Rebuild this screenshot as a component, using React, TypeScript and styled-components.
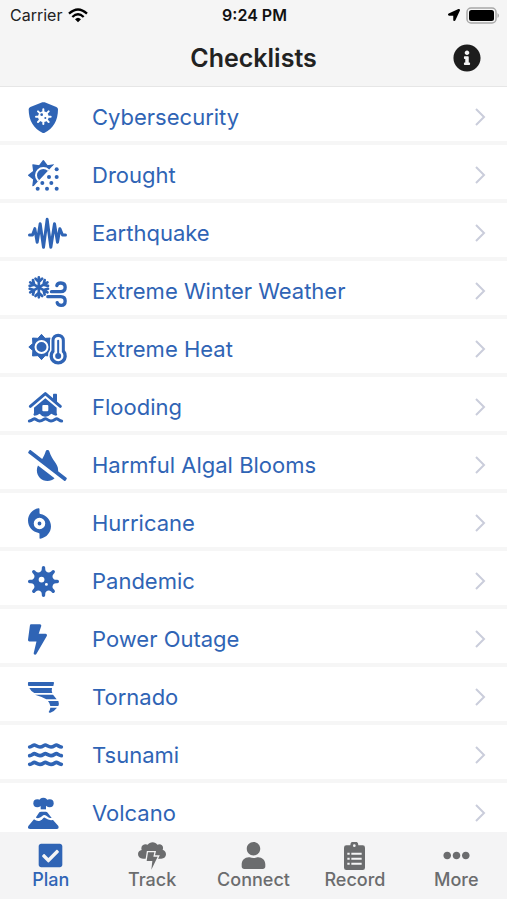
import React from "react";
import styled, { createGlobalStyle } from "styled-components";
import {
  FaBolt,
  FaCheckSquare,
  FaEllipsisH,
  FaInfoCircle,
  FaLocationArrow,
  FaTintSlash,
  FaUser,
  FaVirus,
} from "react-icons/fa";
import { FaHurricane } from "react-icons/fa6";

const blue = "#2f64b5";

const GlobalStyle = createGlobalStyle`
  * { box-sizing: border-box; }
  body { margin: 0; background: #fff; font-family: Inter, "Liberation Sans", sans-serif; }
`;

const Screen = styled.div`
  display: flex;
  flex-direction: column;
  height: 100vh;
  overflow: hidden;
`;

const Header = styled.header`
  flex: none;
  background: #f5f5f5;
  border-bottom: 1px solid #e6e6e6;
`;

const StatusBar = styled.div`
  display: grid;
  grid-template-columns: 1fr auto 1fr;
  align-items: center;
  height: 30px;
  padding: 0 8px 0 10px;
  color: #222;
  font-size: 16px;
`;

const Carrier = styled.div`
  display: flex;
  align-items: center;
  gap: 6px;
`;

const Clock = styled.time`
  color: #111;
  font-weight: 600;
`;

const Indicators = styled.div`
  display: flex;
  align-items: center;
  justify-content: flex-end;
  gap: 6px;
  color: #000;
`;

const TitleBar = styled.div`
  display: grid;
  grid-template-columns: 1fr auto 1fr;
  align-items: center;
  height: 56px;
  padding: 0 26px;
`;

const Title = styled.h1`
  grid-column: 2;
  margin: 0;
  color: #222;
  font-size: 25px;
  font-weight: 600;
  line-height: 32px;
`;

const InfoButton = styled.button`
  display: flex;
  justify-self: end;
  padding: 0;
  border: 0;
  background: none;
  color: #1d1d1d;
  font-size: 28px;
`;

const List = styled.ul`
  flex: 1;
  min-height: 0;
  margin: 0;
  padding: 0;
  overflow: hidden;
  list-style: none;
`;

const Row = styled.li`
  border-bottom: 4px solid #f6f6f6;
`;

const RowLink = styled.a`
  display: grid;
  grid-template-columns: 64px 1fr auto;
  align-items: center;
  padding: 15px 21px 9px 28px;
  color: ${blue};
  font-size: 22px;
  line-height: 30px;
  text-decoration: none;
`;

const RowIcon = styled.span<{ $width: number }>`
  display: flex;
  align-items: center;
  height: 30px;

  svg {
    flex: none;
    width: ${(p) => p.$width}px;
    height: 31px;
    overflow: visible;
  }
`;

const Tabs = styled.nav`
  display: grid;
  flex: none;
  grid-template-columns: repeat(5, 1fr);
  height: 68px;
  padding-top: 10px;
  background: #f4f4f5;
  border-bottom: 1px solid #fff;
`;

const Tab = styled.a<{ $active?: boolean }>`
  display: flex;
  flex-direction: column;
  align-items: center;
  color: ${(p) => (p.$active ? blue : "#6b6c6e")};
  font-size: 18px;
  font-weight: 500;
  line-height: 22px;
  text-decoration: none;
`;

const TabIcon = styled.span`
  display: flex;
  align-items: center;
  justify-content: center;
  height: 27px;
  font-size: 27px;
`;

const starPoints = (cx: number, cy: number, outer: number, inner: number) =>
  Array.from({ length: 16 }, (_, i) => {
    const r = i % 2 ? inner : outer;
    const a = (i * Math.PI) / 8;
    return `${(cx + r * Math.sin(a)).toFixed(1)},${(cy - r * Math.cos(a)).toFixed(1)}`;
  }).join(" ");

const Wifi = () => (
  <svg width="20" height="15" viewBox="0 0 60 45" fill="none" stroke="#000" strokeWidth="7">
    <path d="M3 17Q30-8 57 17" />
    <path d="M13 27Q30 11 47 27" />
    <path d="M21 34Q30 25 39 34L30 43Z" fill="#000" stroke="none" />
  </svg>
);

const Battery = () => (
  <svg width="33" height="17" viewBox="0 0 33 17">
    <rect x="1" y="1" width="29" height="15" rx="4" fill="#f5f5f5" stroke="#a8a8a8" strokeWidth="1.5" />
    <rect x="3" y="3" width="25" height="11" rx="2.5" fill="#000" />
    <path d="M31.5 6v5q1.5-1 1.5-2.5T31.5 6Z" fill="#a8a8a8" />
  </svg>
);

const Chevron = () => (
  <svg width="12" height="20" viewBox="0 0 12 20" fill="none" stroke="#cacddb" strokeWidth="2">
    <path d="M2 2l8 8-8 8" />
  </svg>
);

const ShieldVirus = () => (
  <svg viewBox="0 0 93 93" fill="currentColor">
    <path d="M43 1Q46 0 50 1L85 15Q90 18 90 22C90 56 75 81 50 92Q46 94 43 92C18 81 2 56 2 22Q2 18 7 15Z" />
    <g stroke="#fff" strokeWidth="6" strokeLinecap="round">
      <path d="M46 22V66M24 44H68M30 28L62 60M62 28L30 60" />
    </g>
    <circle cx="46" cy="44" r="16" fill="#fff" />
    <circle cx="41" cy="38" r="4" />
    <circle cx="52" cy="48" r="3" />
  </svg>
);

const DustSun = () => (
  <svg viewBox="0 0 93 93" fill="currentColor">
    <clipPath id="sun-half">
      <path d="M-4-4H94L77 14 17 78-4 97Z" />
    </clipPath>
    <g clipPath="url(#sun-half)">
      <polygon points={starPoints(46, 46, 44, 31)} stroke="currentColor" strokeWidth="4" strokeLinejoin="round" />
      <circle cx="46" cy="46" r="22" fill="none" stroke="#fff" strokeWidth="6" />
    </g>
    {[[86, 28], [63, 51], [86, 51], [43, 69], [70, 69], [29, 86], [57, 86], [86, 86]].map(([x, y]) => (
      <circle key={`${x}-${y}`} cx={x} cy={y} r="6" />
    ))}
  </svg>
);

const Waveform = () => (
  <svg viewBox="0 0 116 93" fill="none" stroke="currentColor" strokeWidth="9" strokeLinecap="round" strokeLinejoin="round">
    <path d="M4 51H13L20 32 27 73 36 17 46 88 57 4 68 88 79 17 88 73 95 32 103 51H112" />
  </svg>
);

const SnowWind = () => (
  <svg viewBox="0 0 116 93" fill="none" stroke="currentColor" strokeLinecap="round" strokeLinejoin="round">
    {[0, 60, 120, 180, 240, 300].map((a) => (
      <path key={a} d="M32 34V4M22 8L32 18 42 8" strokeWidth="8" transform={`rotate(${a} 32 34)`} />
    ))}
    <path d="M70 47H98C108 47 111 40 111 34C111 26 106 21 98 21C91 21 87 24 86 29" strokeWidth="10" />
    <path d="M59 62H98C107 62 111 68 111 75C111 83 106 88 99 88C92 88 88 84 87 80" strokeWidth="10" />
  </svg>
);

const SunThermometer = () => (
  <svg viewBox="0 0 116 93" fill="currentColor">
    <polygon points={starPoints(40, 39, 38, 28)} stroke="currentColor" strokeWidth="3" strokeLinejoin="round" />
    <circle cx="40" cy="39" r="18" fill="none" stroke="#fff" strokeWidth="6" />
    <path d="M70 19A20 20 0 0 1 110 19V49A26 26 0 1 1 70 49Z" stroke="#fff" strokeWidth="9" />
    <path d="M70 19A20 20 0 0 1 110 19V49A26 26 0 1 1 70 49Z" />
    <path d="M79 20A11 11 0 0 1 101 20V54A16 16 0 1 1 79 54Z" fill="#fff" />
    <path d="M90 20V65" fill="none" stroke="currentColor" strokeWidth="6" strokeLinecap="round" />
    <circle cx="90" cy="66" r="9" />
  </svg>
);

const FloodedHouse = () => (
  <svg viewBox="0 0 105 93" fill="currentColor">
    <path d="M75 7Q75 5 77 5H85Q87 5 87 7V36L75 26Z" />
    <path d="M7 43L52 5 97 43" fill="none" stroke="currentColor" strokeWidth="9" strokeLinecap="round" strokeLinejoin="round" />
    <path d="M52 19L86 47V64Q90 70 84 71Q77 70 70 65Q60 75 52 74Q43 75 35 65Q27 71 19 71Q14 69 18 63V47Z" />
    <rect x="43" y="39" width="18" height="19" rx="3" fill="#fff" />
    <path d="M4 87C11 87 17 80 19 80C23 80 27 87 35 87C44 87 48 80 52 80C57 80 61 87 69 87C78 87 82 80 86 80C90 80 95 87 101 87" fill="none" stroke="currentColor" strokeWidth="9" strokeLinecap="round" />
  </svg>
);

const Tornado = () => (
  <svg viewBox="0 0 93 93" fill="currentColor">
    <path d="M2 0H76Q78 0 78 3L76 12H1Q-1 6 0 3 0 0 2 0Z" />
    <path d="M4 18H72Q70 26 73 33H19Q8 27 4 18Z" />
    <path d="M21 38H75Q81 45 86 52H55Q42 44 21 38Z" />
    <path d="M60 57H91Q94 65 91 72H67Q66 64 60 57Z" />
    <path d="M67 77H87Q79 88 67 92 63 93 62 90 66 85 67 77Z" />
  </svg>
);

const Waves = () => (
  <svg viewBox="0 0 105 93" fill="none" stroke="currentColor" strokeWidth="11" strokeLinecap="round">
    {[21, 47, 73].map((y) => (
      <path key={y} d={`M5 ${y}C11 ${y} 15 ${y - 6} 19 ${y - 6}S28 ${y} 36 ${y}S48 ${y - 6} 52 ${y - 6}S61 ${y} 69 ${y}S81 ${y - 6} 85 ${y - 6}S94 ${y} 100 ${y}`} />
    ))}
  </svg>
);

const Volcano = () => (
  <svg viewBox="0 0 93 93" fill="currentColor">
    <circle cx="28" cy="16" r="12" />
    <circle cx="46" cy="13" r="14" />
    <circle cx="65" cy="16" r="12" />
    <path d="M38 20H54V34H38Z" />
    <path d="M34 43Q36 41 39 41H53Q57 41 59 44L71 60Q63 61 59 56 49 47 42 55 35 62 26 60 24 60 24 58Z" />
    <path d="M18 64Q27 71 36 68 42 66 46 60 49 57 53 61 61 68 75 66L91 84Q94 93 86 93H7Q-3 93 1 84Z" />
  </svg>
);

const StormCloud = () => (
  <svg width="28" height="28" viewBox="0 0 84 84" fill="currentColor">
    <path d="M15 50C5 50 0 44 0 36C0 29 5 25 11 24C6 10 21 3 29 8C35-2 53-2 58 8C67 3 79 10 74 23C80 25 84 30 84 37C84 45 78 50 70 50Z" />
    <path d="M30 31H49L46 44H59L40 83 43 57H26Z" stroke="#f4f4f5" strokeWidth="8" />
    <path d="M30 31H49L46 44H59L40 83 43 57H26Z" />
  </svg>
);

const Clipboard = () => (
  <svg width="21" height="28" viewBox="0 0 63 84" fill="currentColor">
    <path d="M7 10H19A12 12 0 0 1 43 10H56Q63 10 63 17V77Q63 84 56 84H7Q0 84 0 77V17Q0 10 7 10Z" />
    <circle cx="31" cy="11" r="4" fill="#f4f4f5" />
    <path d="M10 35H17M22 35H53M10 50H17M22 50H53M10 65H17M22 65H53" stroke="#f4f4f5" strokeWidth="6" />
  </svg>
);

const checklists = [
  { name: "Cybersecurity", icon: <ShieldVirus />, width: 31 },
  { name: "Drought", icon: <DustSun />, width: 31 },
  { name: "Earthquake", icon: <Waveform />, width: 39 },
  { name: "Extreme Winter Weather", icon: <SnowWind />, width: 39 },
  { name: "Extreme Heat", icon: <SunThermometer />, width: 39 },
  { name: "Flooding", icon: <FloodedHouse />, width: 35 },
  { name: "Harmful Algal Blooms", icon: <FaTintSlash />, width: 39 },
  { name: "Hurricane", icon: <FaHurricane />, width: 23 },
  { name: "Pandemic", icon: <FaVirus />, width: 31 },
  { name: "Power Outage", icon: <FaBolt />, width: 19 },
  { name: "Tornado", icon: <Tornado />, width: 31 },
  { name: "Tsunami", icon: <Waves />, width: 35 },
  { name: "Volcano", icon: <Volcano />, width: 31 },
];

const tabs = [
  { name: "Plan", icon: <FaCheckSquare />, active: true },
  { name: "Track", icon: <StormCloud /> },
  { name: "Connect", icon: <FaUser /> },
  { name: "Record", icon: <Clipboard /> },
  { name: "More", icon: <FaEllipsisH /> },
];

export default function App() {
  return (
    <Screen>
      <GlobalStyle />
      <Header>
        <StatusBar>
          <Carrier>
            Carrier
            <Wifi />
          </Carrier>
          <Clock>9:24 PM</Clock>
          <Indicators>
            <FaLocationArrow size={12} />
            <Battery />
          </Indicators>
        </StatusBar>
        <TitleBar>
          <Title>Checklists</Title>
          <InfoButton aria-label="Information">
            <FaInfoCircle />
          </InfoButton>
        </TitleBar>
      </Header>
      <List>
        {checklists.map((item) => (
          <Row key={item.name}>
            <RowLink href="#">
              <RowIcon $width={item.width}>{item.icon}</RowIcon>
              {item.name}
              <Chevron />
            </RowLink>
          </Row>
        ))}
      </List>
      <Tabs>
        {tabs.map((tab) => (
          <Tab key={tab.name} href="#" $active={tab.active}>
            <TabIcon>{tab.icon}</TabIcon>
            {tab.name}
          </Tab>
        ))}
      </Tabs>
    </Screen>
  );
}
